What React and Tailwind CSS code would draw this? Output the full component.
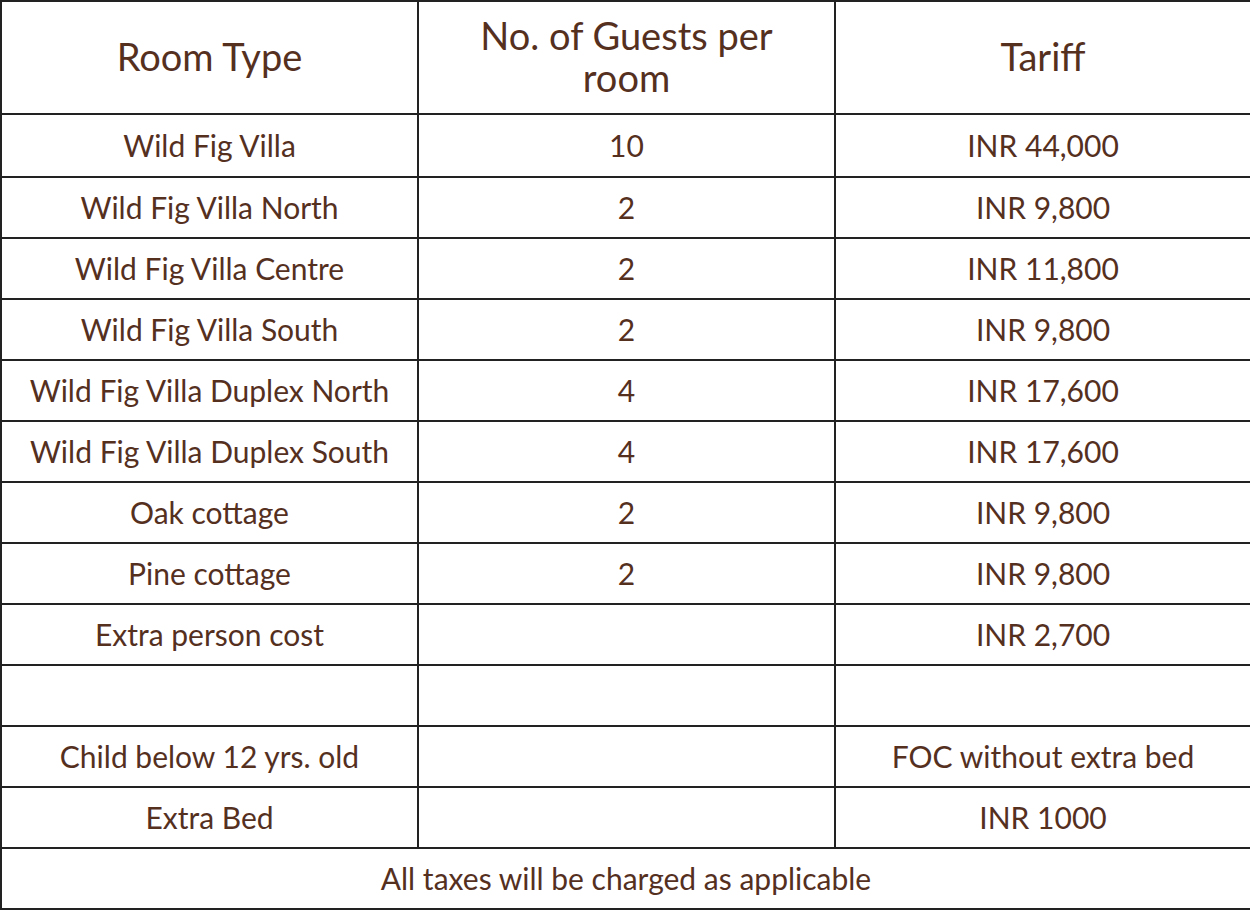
import React from "react";

const rows = [
  ["Wild Fig Villa", "10", "INR 44,000"],
  ["Wild Fig Villa North", "2", "INR 9,800"],
  ["Wild Fig Villa Centre", "2", "INR 11,800"],
  ["Wild Fig Villa South", "2", "INR 9,800"],
  ["Wild Fig Villa Duplex North", "4", "INR 17,600"],
  ["Wild Fig Villa Duplex South", "4", "INR 17,600"],
  ["Oak cottage", "2", "INR 9,800"],
  ["Pine cottage", "2", "INR 9,800"],
  ["Extra person cost", "", "INR 2,700"],
  ["", "", ""],
  ["Child below 12 yrs. old", "", "FOC without extra bed"],
  ["Extra Bed", "", "INR 1000"],
];

const App = () => {
  return (
    <div className="w-[1250px] h-[913px] bg-white text-[#55301f]" style={{ fontFamily: "Lato, 'Open Sans', sans-serif" }}>
      <table className="w-[1250px] border-collapse table-fixed">
        <colgroup>
          <col className="w-[417px]" />
          <col className="w-[417px]" />
          <col className="w-[416px]" />
        </colgroup>
        <thead>
          <tr className="h-[113px]">
            <th className="border-2 border-[#222] font-normal text-[38px] leading-[42px] text-center pb-1">Room Type</th>
            <th className="border-2 border-[#222] font-normal text-[38px] leading-[42px] text-center px-12 pb-1">No. of Guests per room</th>
            <th className="border-2 border-[#222] font-normal text-[38px] leading-[42px] text-center pb-1">Tariff</th>
          </tr>
        </thead>
        <tbody>
          {rows.map((r, i) => (
            <tr key={i} className={i === 0 ? "h-[63px]" : "h-[61px]"}>
              {r.map((c, j) => (
                <td key={j} className="border-2 border-[#222] text-[30px] text-center whitespace-nowrap">
                  {c}
                </td>
              ))}
            </tr>
          ))}
          <tr className="h-[61px]">
            <td colSpan={3} className="border-2 border-[#222] text-[30px] text-center">
              All taxes will be charged as applicable
            </td>
          </tr>
        </tbody>
      </table>
    </div>
  );
};

export default App;
